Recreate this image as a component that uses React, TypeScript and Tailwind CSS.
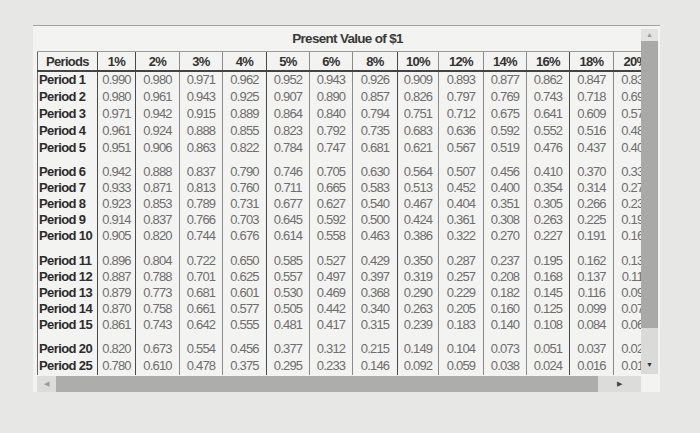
import clsx from "clsx";

const COLS = [
    {w: "w-[60px]", b: "border-[#6a6a6a]"},
    {w: "w-[38px]", b: "border-[#4a4a4a]"},
    {w: "w-[44px]", b: "border-[#4a4a4a]"},
    {w: "w-[43px]", b: "border-[#8a8a8a]"},
    {w: "w-[44px]", b: "border-[#8a8a8a]"},
    {w: "w-[43px]", b: "border-[#4a4a4a]"},
    {w: "w-[43px]", b: "border-[#8a8a8a]"},
    {w: "w-[45px]", b: "border-[#8a8a8a]"},
    {w: "w-[41px]", b: "border-[#4a4a4a]"},
    {w: "w-[45px]", b: "border-[#8a8a8a]"},
    {w: "w-[43px]", b: "border-[#8a8a8a]"},
    {w: "w-[43px]", b: "border-[#8a8a8a]"},
    {w: "w-[44px]", b: "border-[#4a4a4a]"},
    {w: "w-[44px]", b: "border-[#8a8a8a]"},
];

const HEADERS = ["Periods", "1%", "2%", "3%", "4%", "5%", "6%", "8%", "10%", "12%", "14%", "16%", "18%", "20%"];

const GROUPS: { gap: string, h: string, rows: [string, string[]][] }[] = [
    {
        gap: "h-0", h: "h-[17px]", rows: [
            ["Period 1", ["0.990", "0.980", "0.971", "0.962", "0.952", "0.943", "0.926", "0.909", "0.893", "0.877", "0.862", "0.847", "0.833"]],
            ["Period 2", ["0.980", "0.961", "0.943", "0.925", "0.907", "0.890", "0.857", "0.826", "0.797", "0.769", "0.743", "0.718", "0.694"]],
            ["Period 3", ["0.971", "0.942", "0.915", "0.889", "0.864", "0.840", "0.794", "0.751", "0.712", "0.675", "0.641", "0.609", "0.579"]],
            ["Period 4", ["0.961", "0.924", "0.888", "0.855", "0.823", "0.792", "0.735", "0.683", "0.636", "0.592", "0.552", "0.516", "0.482"]],
            ["Period 5", ["0.951", "0.906", "0.863", "0.822", "0.784", "0.747", "0.681", "0.621", "0.567", "0.519", "0.476", "0.437", "0.402"]],
        ]
    },
    {
        gap: "h-[7px]", h: "h-[16px]", rows: [
            ["Period 6", ["0.942", "0.888", "0.837", "0.790", "0.746", "0.705", "0.630", "0.564", "0.507", "0.456", "0.410", "0.370", "0.335"]],
            ["Period 7", ["0.933", "0.871", "0.813", "0.760", "0.711", "0.665", "0.583", "0.513", "0.452", "0.400", "0.354", "0.314", "0.279"]],
            ["Period 8", ["0.923", "0.853", "0.789", "0.731", "0.677", "0.627", "0.540", "0.467", "0.404", "0.351", "0.305", "0.266", "0.233"]],
            ["Period 9", ["0.914", "0.837", "0.766", "0.703", "0.645", "0.592", "0.500", "0.424", "0.361", "0.308", "0.263", "0.225", "0.194"]],
            ["Period 10", ["0.905", "0.820", "0.744", "0.676", "0.614", "0.558", "0.463", "0.386", "0.322", "0.270", "0.227", "0.191", "0.162"]],
        ]
    },
    {
        gap: "h-[9px]", h: "h-[16px]", rows: [
            ["Period 11", ["0.896", "0.804", "0.722", "0.650", "0.585", "0.527", "0.429", "0.350", "0.287", "0.237", "0.195", "0.162", "0.135"]],
            ["Period 12", ["0.887", "0.788", "0.701", "0.625", "0.557", "0.497", "0.397", "0.319", "0.257", "0.208", "0.168", "0.137", "0.112"]],
            ["Period 13", ["0.879", "0.773", "0.681", "0.601", "0.530", "0.469", "0.368", "0.290", "0.229", "0.182", "0.145", "0.116", "0.093"]],
            ["Period 14", ["0.870", "0.758", "0.661", "0.577", "0.505", "0.442", "0.340", "0.263", "0.205", "0.160", "0.125", "0.099", "0.078"]],
            ["Period 15", ["0.861", "0.743", "0.642", "0.555", "0.481", "0.417", "0.315", "0.239", "0.183", "0.140", "0.108", "0.084", "0.065"]],
        ]
    },
    {
        gap: "h-[8px]", h: "h-[17px]", rows: [
            ["Period 20", ["0.820", "0.673", "0.554", "0.456", "0.377", "0.312", "0.215", "0.149", "0.104", "0.073", "0.051", "0.037", "0.026"]],
            ["Period 25", ["0.780", "0.610", "0.478", "0.375", "0.295", "0.233", "0.146", "0.092", "0.059", "0.038", "0.024", "0.016", "0.010"]],
        ]
    },
];

const Spacer = ({h}: { h: string }) => (
    <div className={clsx("flex", h)}>
        {COLS.map((c, i) => (
            <div key={i} className={clsx("shrink-0 border-l", c.w, c.b)}/>
        ))}
    </div>
);

const App = () => {
    return (
        <div className="min-h-screen bg-[#e7e7e5] pt-[25px] pl-[33px] [font-family:'Liberation_Sans',Arial,sans-serif]">
            <div className="w-[627px] h-[367px] bg-[#f3f3f1] border-t border-[#a2a2a2] flex">
                <div className="w-[608px] flex flex-col">
                    <div className="flex-1 overflow-hidden pl-[4px]">
                        <div className="w-[621px]">
                            <div className="h-[25px] pt-[1px] text-center text-[13.5px] tracking-[-0.7px] font-bold text-[#3a3a3a] leading-[24px]">
                                Present Value of $1
                            </div>
                            <div className="flex h-[21px] border-t border-[#9a9a9a] border-b-2 border-b-[#444] text-[13px] tracking-[-0.7px] font-bold text-[#333] leading-[19px]">
                                {HEADERS.map((h, i) => (
                                    <div key={h} className={clsx("shrink-0 border-l text-center whitespace-nowrap", COLS[i].w, COLS[i].b)}>
                                        {h}
                                    </div>
                                ))}
                            </div>
                            {GROUPS.map((g, gi) => (
                                <div key={gi}>
                                    {gi > 0 && <Spacer h={g.gap}/>}
                                    {g.rows.map(([label, vals]) => (
                                        <div key={label} className={clsx("flex", g.h)}>
                                            <div className={clsx("shrink-0 border-l pl-[1px] whitespace-nowrap text-[13px] tracking-[-0.6px] font-bold text-[#2c2c2c] leading-[16px]", COLS[0].w, COLS[0].b)}>
                                                {label}
                                            </div>
                                            {vals.map((v, i) => (
                                                <div key={i}
                                                     className={clsx("shrink-0 border-l text-center whitespace-nowrap text-[13px] tracking-[-0.8px] text-[#6e6e6e] leading-[16px]", COLS[i + 1].w, COLS[i + 1].b)}>
                                                    {v}
                                                </div>
                                            ))}
                                        </div>
                                    ))}
                                </div>
                            ))}
                        </div>
                    </div>
                    <div className="h-[16px] ml-[4px] flex items-stretch bg-[#dcdcdb]">
                        <div className="w-[19px] flex items-center justify-center text-[7px] text-[#9a9a9a]">◀</div>
                        <div className="w-[542px] bg-[#adadac]"/>
                        <div className="flex-1 flex items-center justify-center text-[7px] text-[#444]">▶</div>
                    </div>
                </div>
                <div className="w-[17px] flex flex-col pt-[3px]">
                    <div className="h-[12px] flex items-center justify-center text-[7px] text-[#9a9a9a] bg-[#e2e2e1]">▲</div>
                    <div className="h-[287px] bg-[#a9a9a8]"/>
                    <div className="h-[46px] bg-[#dadad9] flex items-end justify-center pb-[4px] text-[7px] text-[#333]">▼</div>
                    <div className="flex-1"/>
                </div>
            </div>
        </div>
    );
};

export default App;
